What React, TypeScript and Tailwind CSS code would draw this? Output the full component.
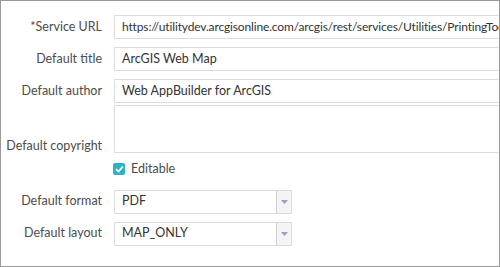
import React from "react";

const font = { fontFamily: "Lato, 'Open Sans', sans-serif" };

function Label({ children }: { children: React.ReactNode }) {
  return (
    <div className="w-[101px] shrink-0 text-right text-[12.5px] text-[#4c4c4c] leading-none">{children}</div>
  );
}

function TextRow({ label, value, tight }: { label: string; value: string; tight?: boolean }) {
  return (
    <div className="flex items-center gap-[12px]">
      <Label>{label}</Label>
      <div
        className={
          tight
            ? "h-[24px] w-[420px] shrink-0 border border-[#dcdcdc] bg-white flex items-center pl-[7px] text-[12px] tracking-[-0.15px] text-[#333] whitespace-nowrap overflow-hidden"
            : "h-[24px] w-[420px] shrink-0 border border-[#dcdcdc] bg-white flex items-center pl-[7px] text-[12.5px] text-[#333] whitespace-nowrap overflow-hidden"
        }
      >
        {value}
      </div>
    </div>
  );
}

function SelectRow({ label, value }: { label: string; value: string }) {
  return (
    <div className="flex items-center gap-[12px]">
      <Label>{label}</Label>
      <div className="h-[24px] w-[178px] shrink-0 border border-[#dcdcdc] bg-white flex text-[12.5px] text-[#333]">
        <div className="flex-1 flex items-center pl-[7px]">{value}</div>
        <div className="w-[15px] border-l border-[#d0d0d8] bg-[#f4f4f4] flex items-center justify-center">
          <svg width="7" height="4" viewBox="0 0 7 4">
            <path d="M0 0 L7 0 L3.5 4 Z" fill="#8fa4c8" />
          </svg>
        </div>
      </div>
    </div>
  );
}

export default function App() {
  return (
    <div style={font} className="w-[500px] h-[267px] border border-[#9a9a9a] bg-white overflow-hidden">
      <div className="pt-[14px] flex flex-col">
        <div className="flex flex-col gap-[8px]">
          <TextRow tight label="*Service URL" value="https://utilitydev.arcgisonline.com/arcgis/rest/services/Utilities/PrintingTools/GPServer" />
          <TextRow label="Default title" value="ArcGIS Web Map" />
          <TextRow label="Default author" value="Web AppBuilder for ArcGIS" />
        </div>
        <div className="flex items-end gap-[12px] mt-[2px]">
          <div className="pb-[1px]"><Label>Default copyright</Label></div>
          <div className="h-[48px] w-[420px] shrink-0 border border-[#dcdcdc] bg-white" />
        </div>
        <div className="flex items-center gap-[6px] pl-[112px] mt-[10px]">
          <div className="w-[12px] h-[12px] rounded-[2px] bg-[#2eb1cb] flex items-center justify-center">
            <svg width="9" height="8" viewBox="0 0 9 8">
              <path d="M1 4.2 L3.5 6.5 L8 1.5" stroke="white" strokeWidth="1.8" fill="none" />
            </svg>
          </div>
          <span className="text-[12.5px] text-[#4c4c4c] leading-none">Editable</span>
        </div>
        <div className="flex flex-col gap-[8px] mt-[14px]">
          <SelectRow label="Default format" value="PDF" />
          <SelectRow label="Default layout" value="MAP_ONLY" />
        </div>
      </div>
    </div>
  );
}
